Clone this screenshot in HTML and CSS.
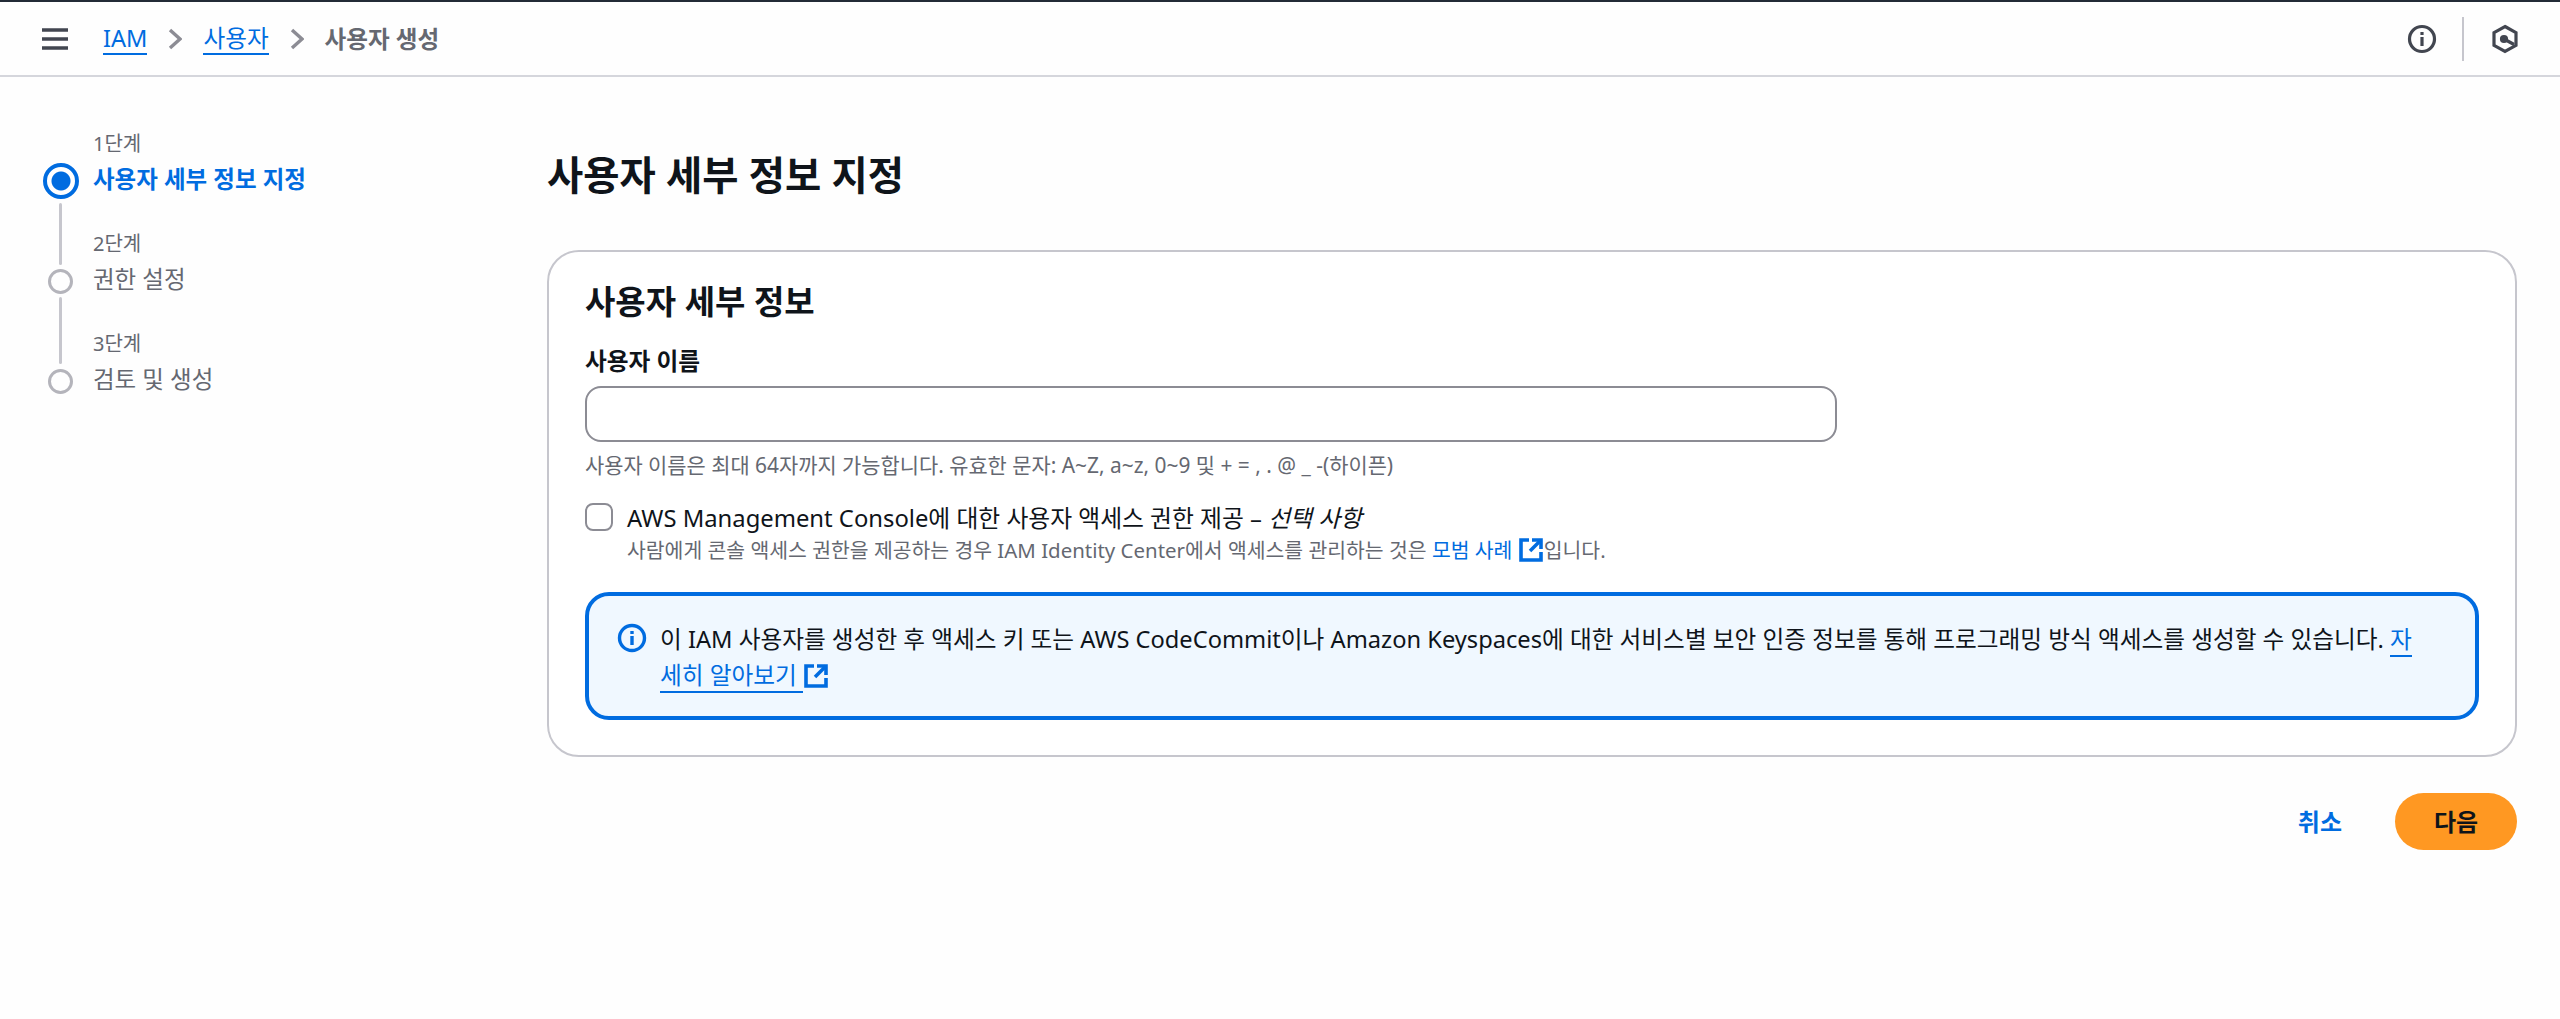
FILE: index.html
```html
<!DOCTYPE html>
<html lang="ko">
  <head>
    <meta charset="UTF-8" />
    <meta name="viewport" content="width=device-width, initial-scale=1.0" />
    <title>사용자 생성</title>
    <link rel="stylesheet" href="styles.css">
  </head>
  <body>
    <!-- 상단 바 -->
    <header class="topbar">
      <svg class="menu-icon" viewBox="0 0 26 22"><path d="M0 2h26M0 11h26M0 20h26"/></svg>
      <nav class="crumbs">
        <a href="#">IAM</a>
        <svg class="chev" viewBox="0 0 14 22"><path d="M2 2l10 9-10 9"/></svg>
        <a href="#">사용자</a>
        <svg class="chev" viewBox="0 0 14 22"><path d="M2 2l10 9-10 9"/></svg>
        <span>사용자 생성</span>
      </nav>
      <div class="top-tools">
        <svg class="tool-icon" viewBox="0 0 30 30">
          <circle cx="15" cy="15" r="12.5"/>
          <path d="M15 13v9"/>
          <path d="M15 8v3"/>
        </svg>
        <i class="tool-sep"></i>
        <svg class="tool-icon" viewBox="0 0 30 30">
          <path d="M15 2.500l11 6.200v12.600l-11 6.200-11-6.200V8.700z"/>
          <circle class="solid" cx="14" cy="15" r="2.500"/>
          <path d="M15 15.500l9 5"/>
        </svg>
      </div>
    </header>

    <div class="layout">
      <!-- 단계 목록 -->
      <ol class="steps">
        <li class="step on">
          <small>1단계</small>
          <div class="step-row"><i class="dot"></i><b>사용자 세부 정보 지정</b></div>
        </li>
        <li class="step">
          <small>2단계</small>
          <div class="step-row"><i class="dot"></i><span>권한 설정</span></div>
        </li>
        <li class="step">
          <small>3단계</small>
          <div class="step-row"><i class="dot"></i><span>검토 및 생성</span></div>
        </li>
      </ol>

      <main class="content">
        <h1>사용자 세부 정보 지정</h1>

        <section class="card">
          <h2>사용자 세부 정보</h2>
          <label class="field-label" for="uname">사용자 이름</label>
          <input class="text-input" id="uname" type="text">
          <p class="hint">사용자 이름은 최대 64자까지 가능합니다. 유효한 문자: A~Z, a~z, 0~9 및 + = , . @ _ -(하이픈)</p>

          <div class="check-row">
            <i class="check-box"></i>
            <div>
              <div class="check-label">AWS Management Console에 대한 사용자 액세스 권한 제공 – <em>선택 사항</em></div>
              <p class="check-desc">사람에게 콘솔 액세스 권한을 제공하는 경우 IAM Identity Center에서 액세스를 관리하는 것은 <a href="#">모범 사례</a> <svg class="ext-icon" viewBox="0 0 26 26"><path d="M11 3H3v20h20v-8"/><path d="M14 3h9v9"/><path d="M23 3L12 14"/></svg>입니다.</p>
            </div>
          </div>

          <div class="alert">
            <svg class="alert-icon" viewBox="0 0 30 30">
              <circle cx="15" cy="15" r="12.500"/>
              <path d="M15 13v9"/>
              <path d="M15 8v3"/>
            </svg>
            <p>이 IAM 사용자를 생성한 후 액세스 키 또는 AWS CodeCommit이나 Amazon Keyspaces에 대한 서비스별 보안 인증 정보를 통해 프로그래밍 방식 액세스를 생성할 수 있습니다. <a href="#">자세히 알아보기 </a><svg class="ext-icon" viewBox="0 0 26 26"><path d="M11 3H3v20h20v-8"/><path d="M14 3h9v9"/><path d="M23 3L12 14"/></svg></p>
          </div>
        </section>

        <div class="actions">
          <a class="btn-link" href="#">취소</a>
          <button class="btn-next" type="button">다음</button>
        </div>
      </main>
    </div>
  </body>
</html>
```

FILE: styles.css
```css
html,
body {
  margin: 0;
  padding: 0;
}
body {
  min-height: 1019px;
  background-color: #fefefe;
  color: #0f141a;
  font-family: "Noto Sans", "Noto Sans CJK KR", sans-serif;
  font-size: 24px;
  line-height: 32px;
  overflow: hidden;
}
a {
  color: #006ce0;
  text-decoration: none;
}

/* 상단 바 */
.topbar {
  display: flex;
  align-items: center;
  box-sizing: border-box;
  height: 77px;
  padding: 0 40px 0 42px;
  border-top: 2px solid #232b37;
  border-bottom: 2px solid #d5d6dc;
}
.menu-icon {
  width: 26px;
  height: 22px;
  fill: none;
  stroke: #424650;
  stroke-width: 3.4;
}
.crumbs {
  display: flex;
  align-items: center;
  gap: 21px;
  margin-left: 35px;
  color: #656871;
  font-weight: 700;
  font-size: 23.6px;
}
.crumbs a {
  font-weight: 400;
  line-height: 30px;
  border-bottom: 2px solid #006ce0;
}
.chev {
  width: 14px;
  height: 22px;
  fill: none;
  stroke: #8c8c94;
  stroke-width: 3.4;
}
.top-tools {
  display: flex;
  align-items: center;
  margin-left: auto;
}
.tool-icon {
  width: 30px;
  height: 30px;
  fill: none;
  stroke: #424650;
  stroke-width: 3.2;
}
.tool-icon .solid {
  fill: #424650;
}
.tool-sep {
  width: 2px;
  height: 44px;
  margin: 0 26px 0 25px;
  background-color: #c6c6cd;
}

.layout {
  display: flex;
  align-items: flex-start;
}

/* 단계 목록 */
.steps {
  width: 547px;
  flex: none;
  box-sizing: border-box;
  margin: 0;
  padding: 53px 0 0 42px;
  list-style: none;
}
.step {
  position: relative;
  height: 100px;
  color: #656871;
}
.step small {
  display: block;
  margin-left: 51px;
  font-size: 20px;
  line-height: 28px;
}
.step-row {
  display: flex;
  align-items: center;
  height: 36px;
  margin-top: 5px;
  gap: 14px;
  font-size: 23.5px;
}
.step-row b,
.step-row span {
  padding-bottom: 4px;
}
.step-row b {
  color: #006ce0;
  font-weight: 700;
}
.dot {
  box-sizing: border-box;
  flex: none;
  width: 25px;
  height: 25px;
  margin: 0 6px;
  border: 3px solid #b4b4bb;
  border-radius: 50%;
}
.step.on .dot {
  width: 36px;
  height: 36px;
  margin: 0 0 0 1px;
  border: 4px solid #006ce0;
  background: radial-gradient(circle, #006ce0 0 9px, #fff 10px);
}
/* 단계 사이 세로선 */
.step:not(:last-child)::after {
  content: "";
  position: absolute;
  left: 17px;
  top: 67px;
  width: 3px;
  height: 67px;
  border-radius: 2px;
  background-color: #c6c6cd;
}
.step.on::after {
  top: 73px;
  height: 62px;
}

/* 본문 */
.content {
  flex: 1;
  box-sizing: border-box;
  padding-right: 43px;
  min-width: 0;
}
h1 {
  margin: 0;
  padding: 73px 0 50px;
  font-size: 39.4px;
  line-height: 50px;
  font-weight: 700;
}
.card {
  box-sizing: border-box;
  height: 507px;
  padding: 30px 36px 0;
  border: 2px solid #c6c6cd;
  border-radius: 32px;
  background-color: #fff;
}
h2 {
  margin: 0;
  font-size: 33px;
  line-height: 40px;
  font-weight: 700;
}
.field-label {
  display: block;
  margin-top: 23px;
  font-size: 23.7px;
  line-height: 32px;
  font-weight: 600;
}
.text-input {
  display: block;
  box-sizing: border-box;
  width: 1252px;
  height: 56px;
  margin-top: 9px;
  border: 2px solid #8c8c94;
  border-radius: 16px;
  background-color: #fff;
  outline: none;
}
.hint {
  margin: 9px 0 0;
  color: #656871;
  font-size: 20.9px;
  line-height: 28px;
}
.check-row {
  display: flex;
  gap: 14px;
  margin-top: 23px;
}
.check-box {
  flex: none;
  box-sizing: border-box;
  width: 28px;
  height: 28px;
  margin-top: 1px;
  border: 2px solid #8c8c94;
  border-radius: 8px;
  background-color: #fff;
}
.check-label {
  font-size: 23.8px;
  line-height: 32px;
}
.check-desc {
  margin: 2px 0 0;
  color: #656871;
  font-size: 20.45px;
  line-height: 28px;
}
.ext-icon {
  width: 26px;
  height: 26px;
  vertical-align: -5px;
  fill: none;
  stroke: #006ce0;
  stroke-width: 3.6;
}

/* 안내 박스 */
.alert {
  display: flex;
  gap: 13px;
  box-sizing: border-box;
  height: 128px;
  margin-top: 28px;
  padding: 25px 56px 0 28px;
  border: 4px solid #006ce0;
  border-radius: 24px;
  background-color: #f0f8ff;
}
.alert p {
  margin: 0;
  font-size: 23.67px;
  line-height: 36px;
}
.alert a {
  border-bottom: 2px solid #006ce0;
}
.alert-icon {
  flex: none;
  width: 30px;
  height: 30px;
  margin-top: 2px;
  fill: none;
  stroke: #006ce0;
  stroke-width: 3.4;
}

/* 하단 버튼 */
.actions {
  display: flex;
  align-items: center;
  justify-content: flex-end;
  gap: 53px;
  margin-top: 36px;
}
.btn-link {
  font-weight: 700;
}
.btn-next {
  box-sizing: border-box;
  width: 122px;
  height: 57px;
  border: 0;
  border-radius: 29px;
  background-color: #ff9822;
  color: #0f141a;
  font: inherit;
  font-weight: 700;
}
```
